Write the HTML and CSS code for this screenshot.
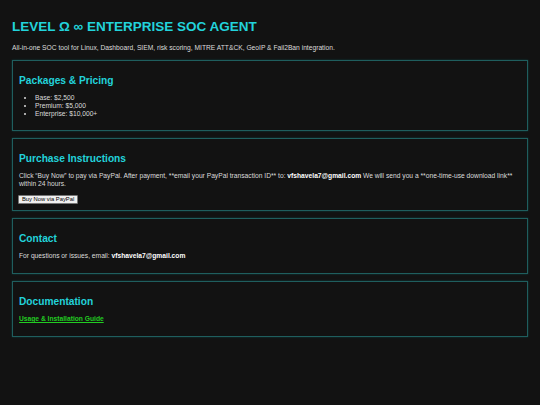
FILE: index.html
```html
<!DOCTYPE html>
<html lang="en">
<head>
<meta charset="utf-8">
<title>LEVEL Ω ∞ ENTERPRISE SOC AGENT</title>
<link rel="stylesheet" href="styles.css">
</head>
<body>
<h1 class="title">LEVEL Ω ∞ ENTERPRISE SOC AGENT</h1>
<p class="intro">All-in-one SOC tool for Linux, Dashboard, SIEM, risk scoring, MITRE ATT&amp;CK, GeoIP &amp; Fail2Ban integration.</p>

<section class="card">
  <h2>Packages &amp; Pricing</h2>
  <ul class="list">
    <li>Base: $2,500</li>
    <li>Premium: $5,000</li>
    <li>Enterprise: $10,000+</li>
  </ul>
</section>

<section class="card">
  <h2>Purchase Instructions</h2>
  <p>Click “Buy Now” to pay via PayPal. After payment, **email your PayPal transaction ID** to: <strong>vfshavela7@gmail.com</strong> We will send you a **one-time-use download link** within 24 hours.</p>
  <button class="btn" type="button">Buy Now via PayPal</button>
</section>

<section class="card">
  <h2>Contact</h2>
  <p>For questions or issues, email: <strong>vfshavela7@gmail.com</strong></p>
</section>

<section class="card">
  <h2>Documentation</h2>
  <p><a class="doclink" href="#">Usage &amp; Installation Guide</a></p>
</section>
</body>
</html>
```
FILE: styles.css
```css
html, body {
  background: #121212;
}
body {
  margin: 0;
  padding: 0 12px 20px;
  font-family: "Liberation Sans", Arial, sans-serif;
  color: #dcdcdc;
  font-size: 6.7px;
}
.title {
  margin: 19px 0 0;
  font-size: 13.5px;
  line-height: 16px;
  font-weight: bold;
  color: #22d3db;
}
.intro {
  margin: 9px 0 8px;
  font-size: 6.7px;
  line-height: 8px;
}
.card {
  border: 1px solid #1f5e5e;
  box-shadow: 0 0 2px rgba(0, 200, 200, 0.25);
  padding: 6px 6px;
  margin-bottom: 7px;
}
.card h2 {
  margin: 8px 0 7px;
  font-size: 10.2px;
  line-height: 12px;
  font-weight: bold;
  color: #22d3db;
}
.card p {
  margin: 0 0 7px;
  line-height: 8px;
}
.list {
  margin: 0 0 6px;
  padding-left: 16px;
  line-height: 8px;
}
strong {
  color: #ffffff;
  font-weight: bold;
}
.btn {
  display: block;
  margin: 0 0 0 -1px;
  padding: 0 3px;
  font-family: "Liberation Sans", Arial, sans-serif;
  font-size: 5.8px;
  line-height: 7px;
  color: #000;
  background: #efefef;
  border: 1px solid #767676;
  border-radius: 1px;
}
.doclink {
  color: #22cc22;
  font-weight: bold;
  text-decoration: underline;
}
```
